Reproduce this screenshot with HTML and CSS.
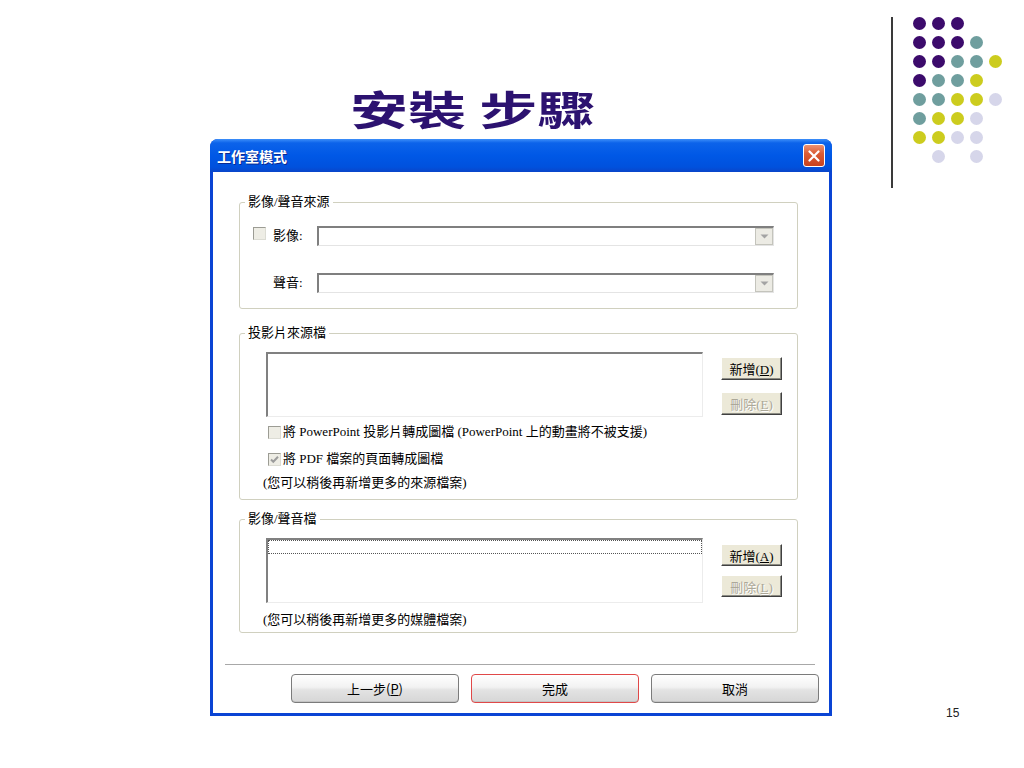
FILE: index.html
```html
<!DOCTYPE html>
<html lang="zh-Hant">
<head>
    <meta charset="UTF-8">
    <title>安裝步驟</title>
    <link rel="stylesheet" href="styles.css">
</head>
<body>

<div class="slide">
    <div class="main">
        <h1 class="title"><span>安裝 步驟</span></h1>

        <!-- Studio mode dialog -->
        <div class="dialog">
            <div class="titlebar">
                <span class="titlebar-text">工作室模式</span>
                <span class="close-btn">
                    <svg width="12" height="12" viewBox="0 0 12 12"><path d="M1.5 1.5 L10.5 10.5 M10.5 1.5 L1.5 10.5" stroke="#fff" stroke-width="2.2" stroke-linecap="round"/></svg>
                </span>
            </div>

            <div class="dialog-body">
                <!-- Video / audio source -->
                <fieldset class="group group-source">
                    <legend>影像/聲音來源</legend>
                    <div class="source-grid">
                        <span class="checkbox"></span>
                        <span class="field-label">影像:</span>
                        <div class="combo">
                            <span class="combo-btn"><svg width="9" height="5" viewBox="0 0 9 5"><path d="M0.5 0.5 H8.5 L4.5 4.5 Z" fill="#a3a3a3"/></svg></span>
                        </div>
                        <span></span>
                        <span class="field-label">聲音:</span>
                        <div class="combo">
                            <span class="combo-btn"><svg width="9" height="5" viewBox="0 0 9 5"><path d="M0.5 0.5 H8.5 L4.5 4.5 Z" fill="#a3a3a3"/></svg></span>
                        </div>
                    </div>
                </fieldset>

                <!-- Slide source files -->
                <fieldset class="group group-slides">
                    <legend>投影片來源檔</legend>
                    <div class="list-row">
                        <div class="listbox"></div>
                        <div class="side-buttons">
                            <button class="xp-btn">新增(<u>D</u>)</button>
                            <button class="xp-btn disabled">刪除(<u>E</u>)</button>
                        </div>
                    </div>
                    <div class="check-row first">
                        <span class="checkbox"></span>
                        <span>將 PowerPoint 投影片轉成圖檔 (PowerPoint 上的動畫將不被支援)</span>
                    </div>
                    <div class="check-row second">
                        <span class="checkbox checked">
                            <svg width="11" height="11" viewBox="0 0 11 11"><path d="M2 5.5 L4.3 7.8 L9 2.8" fill="none" stroke="#9c9c9c" stroke-width="2"/></svg>
                        </span>
                        <span>將 PDF 檔案的頁面轉成圖檔</span>
                    </div>
                    <div class="note">(您可以稍後再新增更多的來源檔案)</div>
                </fieldset>

                <!-- Media files -->
                <fieldset class="group group-media">
                    <legend>影像/聲音檔</legend>
                    <div class="list-row">
                        <div class="listbox">
                            <div class="focus-row"></div>
                        </div>
                        <div class="side-buttons compact">
                            <button class="xp-btn">新增(<u>A</u>)</button>
                            <button class="xp-btn disabled">刪除(<u>L</u>)</button>
                        </div>
                    </div>
                    <div class="note">(您可以稍後再新增更多的媒體檔案)</div>
                </fieldset>

                <div class="separator"></div>

                <div class="footer">
                    <button class="footer-btn">上一步(<u>P</u>)</button>
                    <button class="footer-btn default">完成</button>
                    <button class="footer-btn">取消</button>
                </div>
            </div>
        </div>
    </div>

    <!-- Slide template decoration -->
    <aside class="side">
        <div class="dots">
            <span class="dot p"></span><span class="dot p"></span><span class="dot p"></span><span></span><span></span>
            <span class="dot p"></span><span class="dot p"></span><span class="dot p"></span><span class="dot t"></span><span></span>
            <span class="dot p"></span><span class="dot p"></span><span class="dot t"></span><span class="dot t"></span><span class="dot y"></span>
            <span class="dot p"></span><span class="dot t"></span><span class="dot t"></span><span class="dot y"></span><span></span>
            <span class="dot t"></span><span class="dot t"></span><span class="dot y"></span><span class="dot y"></span><span class="dot l"></span>
            <span class="dot t"></span><span class="dot y"></span><span class="dot y"></span><span class="dot l"></span><span></span>
            <span class="dot y"></span><span class="dot y"></span><span class="dot l"></span><span class="dot l"></span><span></span>
            <span></span><span class="dot l"></span><span></span><span class="dot l"></span><span></span>
        </div>
        <div class="page-num">15</div>
    </aside>
</div>

</body>
</html>
```

FILE: styles.css
```css
/* General reset */
* {
    box-sizing: border-box;
}

body {
    margin: 0;
    background-color: #fff;
}

.slide {
    width: 1024px;
    height: 768px;
    display: flex;
    background-color: #fff;
    font-family: "Liberation Serif", "Noto Sans CJK TC", serif;
    font-size: 13px;
    color: #000;
}

.main {
    margin-left: 210px;
    width: 622px;
}

/* Slide title */
.title {
    margin: 0;
    height: 139px;
    padding: 86px 0 0 140px;
    font-family: "Noto Sans CJK TC", sans-serif;
    font-size: 40px;
    line-height: 44px;
    font-weight: bold;
    color: #2c1270;
    white-space: nowrap;
}

.title span {
    display: inline-block;
    transform: scaleX(1.45);
    transform-origin: left center;
}

/* Dialog window */
.dialog {
    height: 577px;
    display: flex;
    flex-direction: column;
    padding: 0 3px 3px;
    background-color: #0a44d4;
    border-radius: 8px 8px 0 0;
}

.titlebar {
    height: 33px;
    margin: 0 -3px;
    padding: 0 7px;
    display: flex;
    align-items: center;
    justify-content: space-between;
    border-radius: 8px 8px 0 0;
    background: linear-gradient(#3d8ff9 0%, #0c63ea 12%, #0058e6 50%, #0051dd 85%, #0a45c9 100%);
}

.titlebar-text {
    font-family: "Noto Sans CJK TC", sans-serif;
    font-size: 14px;
    font-weight: bold;
    color: #fff;
    text-shadow: 1px 1px #0a2a90;
}

.close-btn {
    width: 22px;
    height: 23px;
    display: flex;
    align-items: center;
    justify-content: center;
    border: 1px solid #fff;
    border-radius: 3px;
    background: linear-gradient(#ec9272, #db5d36 40%, #c8421d);
}

.dialog-body {
    flex: 1;
    padding-top: 22px;
    background-color: #fff;
}

/* Group frames */
.group {
    margin: 0 31px 0 26px;
    padding: 0;
    min-width: 0;
    border: 1px solid #d0d0bf;
    border-radius: 3px;
}

.group legend {
    margin-left: 5px;
    padding: 0 3px;
    font-size: 13px;
    line-height: 16px;
}

.group-slides {
    margin-top: 16px;
    padding-bottom: 8px;
}

.group-media {
    margin-top: 11px;
    padding-bottom: 4px;
}

.source-grid {
    display: grid;
    grid-template-columns: 20px 44px 1fr;
    grid-auto-rows: 20px;
    row-gap: 27px;
    align-items: center;
    padding: 16px 23px 15px 13px;
}

.field-label {
    line-height: 16px;
}

.combo {
    height: 20px;
    display: flex;
    justify-content: flex-end;
    border-style: solid;
    border-width: 2px 1px 1px 2px;
    border-color: #7f7f7f #e4e4e4 #e4e4e4 #7f7f7f;
    background-color: #fff;
}

.combo-btn {
    width: 18px;
    height: 17px;
    display: flex;
    align-items: center;
    justify-content: center;
    border: 1px solid #c4c4bc;
    background-color: #ecebe4;
}

.checkbox {
    width: 13px;
    height: 13px;
    flex: none;
    display: flex;
    align-items: center;
    justify-content: center;
    border: 1px solid;
    border-color: #9c9c94 #dcdcd4 #dcdcd4 #9c9c94;
    background-color: #eeede5;
}

.source-grid .checkbox {
    align-self: start;
    margin-top: 1px;
}

/* List boxes and side buttons */
.list-row {
    display: flex;
    gap: 18px;
    padding: 11px 15px 0 26px;
}

.listbox {
    width: 437px;
    height: 65px;
    flex: none;
    border-style: solid;
    border-width: 2px 1px 1px 2px;
    border-color: #808080 #ececec #ececec #808080;
    background-color: #fff;
}

.focus-row {
    height: 14px;
    border: 1px dotted #555;
}

.side-buttons {
    display: flex;
    flex-direction: column;
    gap: 12px;
    padding-top: 5px;
}

.side-buttons.compact {
    gap: 9px;
    padding-top: 6px;
}

.xp-btn {
    width: 61px;
    height: 23px;
    padding: 0;
    font-family: "Liberation Serif", "Noto Sans CJK TC", serif;
    font-size: 13px;
    color: #000;
    background-color: #ece9d8;
    border: 1px solid;
    border-color: #fff #404040 #404040 #fff;
    box-shadow: inset -1px -1px #8c8c84;
}

.compact .xp-btn {
    height: 22px;
}

.xp-btn.disabled {
    color: #aca899;
    text-shadow: 1px 1px #fff;
}

.check-row {
    display: flex;
    align-items: center;
    gap: 2px;
    padding-left: 28px;
    line-height: 16px;
}

.check-row.first {
    margin-top: 7px;
}

.check-row.second {
    margin-top: 11px;
}

.note {
    margin-top: 8px;
    padding-left: 23px;
    line-height: 16px;
}

.group-media .note {
    margin-top: 9px;
}

/* Footer */
.separator {
    margin: 31px 14px 0 12px;
    border-top: 1px solid #a8a8a8;
}

.footer {
    display: flex;
    gap: 12px;
    padding: 9px 0 0 78px;
}

.footer-btn {
    width: 168px;
    height: 29px;
    padding: 0;
    font-family: "Noto Sans CJK TC", sans-serif;
    font-size: 13px;
    color: #000;
    border: 1px solid #7b7b7b;
    border-radius: 4px;
    background: linear-gradient(#ffffff, #f2f2f2 45%, #e3e3e3 55%, #d6d6d6);
    box-shadow: inset 0 -1px #c4c4c4;
}

.footer-btn.default {
    border-color: #e04848;
}

/* Template decoration */
.side {
    flex: 1;
    display: flex;
    flex-direction: column;
    padding: 17px 0 0 59px;
}

.dots {
    align-self: flex-start;
    display: grid;
    grid-template-columns: repeat(5, 13px);
    grid-auto-rows: 13px;
    gap: 6px;
    padding: 0 0 25px 20px;
    border-left: 2px solid #3a3a3a;
}

.dot {
    border-radius: 50%;
}

.dot.p { background-color: #3c0b6c; }
.dot.t { background-color: #6f9e9e; }
.dot.y { background-color: #cccc1e; }
.dot.l { background-color: #d6d6ea; }

.page-num {
    margin-top: auto;
    margin-left: 55px;
    padding-bottom: 48px;
    font-family: "Liberation Sans", Arial, sans-serif;
    font-size: 12px;
    line-height: 14px;
    color: #222;
}
```
